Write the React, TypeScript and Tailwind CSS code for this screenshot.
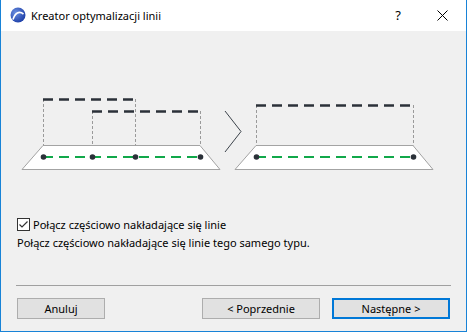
import React from "react";

const F = '"Noto Sans", "Open Sans", sans-serif';

function Diagram() {
  const ox = 1;
  const oy = 31;
  const X = (x: number) => x - ox;
  const Y = (y: number) => y - oy;
  const dark = "#2b3139";
  const green = "#11a84a";
  const gray = "#9a9a9a";
  return (
    <svg width={465} height={150} viewBox="0 0 465 150" className="block">
      <polygon
        points={`${X(43)},${Y(145.5)} ${X(200)},${Y(145.5)} ${X(220)},${Y(169.5)} ${X(22)},${Y(169.5)}`}
        fill="#ffffff"
        stroke="#a3a3a3"
        strokeWidth={1}
      />
      {[
        [43, 99],
        [92, 111],
        [135, 99],
        [200, 111],
      ].map(([x, y], i) => (
        <line key={i} x1={X(x) + 0.5} y1={Y(y)} x2={X(x) + 0.5} y2={Y(145.5)} stroke={gray} strokeWidth={1} strokeDasharray="3 2" />
      ))}
      <line x1={X(43)} y1={Y(99.5)} x2={X(135)} y2={Y(99.5)} stroke={dark} strokeWidth={2.6} strokeDasharray="10 6" />
      <line x1={X(92)} y1={Y(111.5)} x2={X(200)} y2={Y(111.5)} stroke={dark} strokeWidth={2.6} strokeDasharray="10 6" />
      <line x1={X(43)} y1={Y(157)} x2={X(200)} y2={Y(157)} stroke={green} strokeWidth={2.2} strokeDasharray="10 6" />
      {[43, 92, 135, 200].map((x, i) => (
        <circle key={i} cx={X(x) + 0.5} cy={Y(157)} r={2.8} fill={dark} />
      ))}

      <polyline
        points={`${X(225)},${Y(111)} ${X(241)},${Y(131.5)} ${X(225)},${Y(152)}`}
        fill="none"
        stroke="#3c434b"
        strokeWidth={1}
      />

      <polygon
        points={`${X(256)},${Y(145.5)} ${X(413)},${Y(145.5)} ${X(433)},${Y(169.5)} ${X(235)},${Y(169.5)}`}
        fill="#ffffff"
        stroke="#a3a3a3"
        strokeWidth={1}
      />
      {[256, 413].map((x, i) => (
        <line key={i} x1={X(x) + 0.5} y1={Y(105)} x2={X(x) + 0.5} y2={Y(145.5)} stroke={gray} strokeWidth={1} strokeDasharray="3 2" />
      ))}
      <line x1={X(256)} y1={Y(105.5)} x2={X(413)} y2={Y(105.5)} stroke={dark} strokeWidth={2.6} strokeDasharray="10 6" />
      <line x1={X(256)} y1={Y(157)} x2={X(413)} y2={Y(157)} stroke={green} strokeWidth={2.2} strokeDasharray="10 6" />
      {[256, 413].map((x, i) => (
        <circle key={i} cx={X(x) + 0.5} cy={Y(157)} r={2.8} fill={dark} />
      ))}
    </svg>
  );
}

function AppIcon() {
  return (
    <svg width={16} height={16} viewBox="0 0 16 16">
      <defs>
        <radialGradient id="g" cx="35%" cy="35%" r="70%">
          <stop offset="0%" stopColor="#6b8fe0" />
          <stop offset="100%" stopColor="#1d3fa8" />
        </radialGradient>
      </defs>
      <circle cx={8} cy={8} r={7.5} fill="url(#g)" />
      <path d="M3 12.5 C5 6 9 3.5 13.5 7" fill="none" stroke="#ffffff" strokeWidth={1.6} />
    </svg>
  );
}

export default function App() {
  return (
    <div
      className="w-[467px] h-[332px] flex flex-col bg-[#f0f0f0] border-x border-b border-[#1883d7] text-[11px] text-black overflow-hidden"
      style={{ fontFamily: F }}
    >
      <div className="h-[31px] bg-white flex items-center shrink-0">
        <div className="ml-[9px] mt-[-1px]">
          <AppIcon />
        </div>
        <div className="ml-[5px] text-[11px] leading-none">Kreator optymalizacji linii</div>
        <div className="ml-auto w-[20px] text-center text-[13px] leading-none mr-[29px]">?</div>
        <svg width={11} height={11} viewBox="0 0 11 11" className="mr-[18px]">
          <path d="M0.5 0.5 L10.5 10.5 M10.5 0.5 L0.5 10.5" stroke="#000" strokeWidth={1} />
        </svg>
      </div>

      <Diagram />

      <div className="flex items-center mt-[36px] ml-[16px] h-[14px]">
        <div className="w-[13px] h-[13px] border border-[#333] bg-white flex items-center justify-center">
          <svg width={11} height={11} viewBox="0 0 11 11">
            <path d="M1.5 5.5 L4 8 L9.5 2.5" fill="none" stroke="#333" strokeWidth={1.2} />
          </svg>
        </div>
        <span className="ml-[3px] leading-none">Połącz częściowo nakładające się linie</span>
      </div>
      <div className="ml-[16px] mt-[5px] leading-[14px]">Połącz częściowo nakładające się linie tego samego typu.</div>

      <div className="mt-auto mx-[15px] h-px bg-[#a0a0a0]" />

      <div className="flex items-center mt-[12px] mb-[12px] ml-[16px] mr-[16px]">
        <button className="w-[88px] h-[21px] bg-[#e1e1e1] border border-[#adadad] leading-none">Anuluj</button>
        <button className="ml-auto w-[118px] h-[21px] bg-[#e1e1e1] border border-[#adadad] leading-none">&lt; Poprzednie</button>
        <button className="ml-[12px] w-[118px] h-[21px] bg-[#e1e1e1] border-2 border-[#0078d7] leading-none">Następne &gt;</button>
      </div>
    </div>
  );
}
